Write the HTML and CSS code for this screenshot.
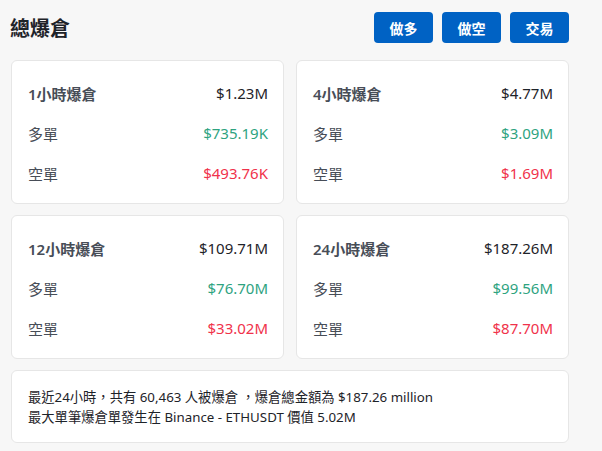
FILE: index.html
```html
<!DOCTYPE html>
<html lang="zh-Hant">
<head>
<meta charset="utf-8">
<link rel="stylesheet" href="styles.css">
</head>
<body>
<div class="page">
  <div class="top">
    <h1 class="title">總爆倉</h1>
    <div class="btns">
      <a class="btn">做多</a>
      <a class="btn">做空</a>
      <a class="btn">交易</a>
    </div>
  </div>
  <div class="grid">
    <div class="card">
      <div class="row head"><span>1小時爆倉</span><span class="val">$1.23M</span></div>
      <div class="row"><span>多單</span><span class="up">$735.19K</span></div>
      <div class="row"><span>空單</span><span class="down">$493.76K</span></div>
    </div>
    <div class="card">
      <div class="row head"><span>4小時爆倉</span><span class="val">$4.77M</span></div>
      <div class="row"><span>多單</span><span class="up">$3.09M</span></div>
      <div class="row"><span>空單</span><span class="down">$1.69M</span></div>
    </div>
    <div class="card">
      <div class="row head"><span>12小時爆倉</span><span class="val">$109.71M</span></div>
      <div class="row"><span>多單</span><span class="up">$76.70M</span></div>
      <div class="row"><span>空單</span><span class="down">$33.02M</span></div>
    </div>
    <div class="card">
      <div class="row head"><span>24小時爆倉</span><span class="val">$187.26M</span></div>
      <div class="row"><span>多單</span><span class="up">$99.56M</span></div>
      <div class="row"><span>空單</span><span class="down">$87.70M</span></div>
    </div>
  </div>
  <div class="note">
    <p>最近24小時，共有 60,463 人被爆倉 ，爆倉總金額為 $187.26 million</p>
    <p>最大單筆爆倉單發生在 Binance - ETHUSDT 價值 5.02M</p>
  </div>
</div>
</body>
</html>
```
FILE: styles.css
```css
* { box-sizing: border-box; }
html, body { margin: 0; padding: 0; }
body {
  background: #f7f7f7;
  font-family: "Noto Sans", "Noto Sans CJK TC", sans-serif;
  color: #1e2329;
}
.page {
  width: 569px;
  padding: 12px 0 0 11px;
}
.top {
  display: flex;
  align-items: center;
  justify-content: space-between;
  height: 31px;
  margin-bottom: 17px;
}
.title {
  margin: 0 0 0 -1px;
  font-size: 20px;
  font-weight: 700;
  color: #1e2329;
}
.btns { display: flex; gap: 9px; }
.btn {
  width: 59px;
  height: 31px;
  border-radius: 4px;
  background: #0062c4;
  color: #fff;
  font-size: 14px;
  font-weight: 700;
  display: flex;
  align-items: center;
  justify-content: center;
}
.grid {
  display: grid;
  grid-template-columns: 273px 273px;
  column-gap: 12px;
  row-gap: 11px;
}
.card {
  background: #fff;
  border: 1px solid #e6e6e6;
  border-radius: 6px;
  height: 144px;
  padding: 12px 15px 10px 16px;
}
.row {
  height: 40px;
  display: flex;
  align-items: center;
  justify-content: space-between;
  font-size: 15px;
  color: #474d57;
}
.row.head { font-weight: 600; }
.row.head .val { font-weight: 400; color: #1e2329; }
.up { color: #2ea37f; }
.down { color: #f0324b; }
.note {
  margin-top: 11px;
  background: #fff;
  border: 1px solid #e6e6e6;
  border-radius: 6px;
  height: 73px;
  padding: 16px 16px;
  font-size: 13.3px;
  color: #1e2329;
}
.note p { margin: 0; line-height: 20px; }
```
